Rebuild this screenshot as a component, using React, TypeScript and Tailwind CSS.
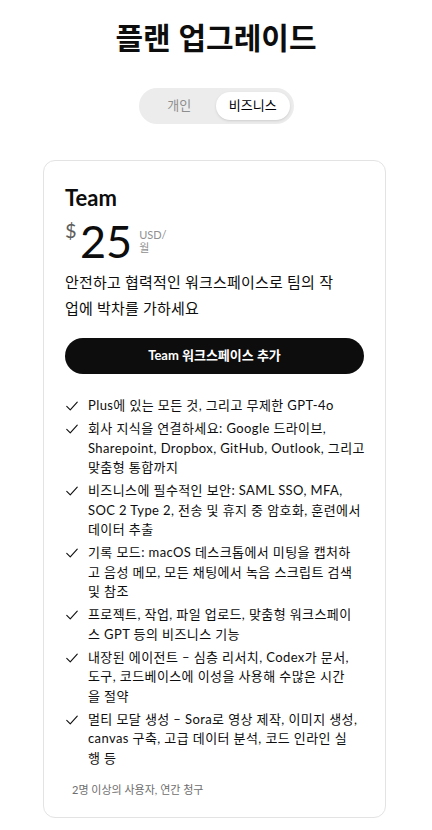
import React, { useState } from 'react';

// each feature is kept on the same line breaks as the design
const features: string[][] = [
  ['Plus에 있는 모든 것, 그리고 무제한 GPT-4o'],
  ['회사 지식을 연결하세요: Google 드라이브,', 'Sharepoint, Dropbox, GitHub, Outlook, 그리고', '맞춤형 통합까지'],
  ['비즈니스에 필수적인 보안: SAML SSO, MFA,', 'SOC 2 Type 2, 전송 및 휴지 중 암호화, 훈련에서', '데이터 추출'],
  ['기록 모드: macOS 데스크톱에서 미팅을 캡처하', '고 음성 메모, 모든 채팅에서 녹음 스크립트 검색', '및 참조'],
  ['프로젝트, 작업, 파일 업로드, 맞춤형 워크스페이', '스 GPT 등의 비즈니스 기능'],
  ['내장된 에이전트 – 심층 리서치, Codex가 문서,', '도구, 코드베이스에 이성을 사용해 수많은 시간', '을 절약'],
  ['멀티 모달 생성 – Sora로 영상 제작, 이미지 생성,', 'canvas 구축, 고급 데이터 분석, 코드 인라인 실', '행 등'],
];

function Check() {
  return (
    <svg viewBox="0 0 16 16" className="w-[14px] h-[14px] shrink-0 mt-[3px]" fill="none" stroke="#111" strokeWidth="1.3" strokeLinecap="round" strokeLinejoin="round">
      <path d="M2 8.5 L6 12.5 L14 3.5" />
    </svg>
  );
}

export default function App() {
  const [tab, setTab] = useState<'personal' | 'business'>('business');

  return (
    <div className="min-h-screen bg-white text-[#0d0d0d] font-['Noto_Sans','Noto_Sans_CJK_KR',sans-serif]">
      <div className="flex flex-col items-center pt-[18px]">
        <h1 className="text-[30px] font-bold leading-[40px]">플랜 업그레이드</h1>

        {/* toggle */}
        <div className="mt-[30px] flex items-center bg-[#ececec] rounded-full p-[4px] w-[155px] h-[36px]">
          <button
            onClick={() => setTab('personal')}
            className={`flex-1 h-full rounded-full text-[13px] ${tab === 'personal' ? 'bg-white text-black shadow-sm' : 'text-[#8e8e8e]'}`}
          >
            개인
          </button>
          <button
            onClick={() => setTab('business')}
            className={`flex-1 h-full rounded-full text-[13px] ${tab === 'business' ? 'bg-white text-black shadow-sm' : 'text-[#8e8e8e]'}`}
          >
            비즈니스
          </button>
        </div>
      </div>

      {/* card */}
      <div className="mt-[36px] ml-[43px] w-[343px] border border-[#e3e3e3] rounded-[12px] px-[21px] pt-[22px] pb-[19px] font-['Lato','Noto_Sans_CJK_KR',sans-serif] tracking-[0.4px]">
        <h2 className="text-[22px] font-bold leading-[30px] tracking-normal">Team</h2>

        <div className="mt-[8px] flex items-start h-[40px]">
          <span className="text-[20px] text-[#5d5d5d] leading-[20px] mt-[-1px]">$</span>
          <span className="text-[45px] leading-[40px] ml-[3px] tracking-normal">25</span>
          <div className="ml-[7px] mt-[7px] text-[11px] leading-[13px] text-[#8f8f8f] tracking-normal">
            <div>USD/</div>
            <div>월</div>
          </div>
        </div>

        <p className="mt-[8px] text-[15px] leading-[26px] tracking-[0.2px]">
          <span className="block whitespace-nowrap">안전하고 협력적인 워크스페이스로 팀의 작</span>
          <span className="block whitespace-nowrap">업에 박차를 가하세요</span>
        </p>

        <button className="mt-[17px] w-full h-[36px] rounded-full bg-[#0d0d0d] text-white text-[13px] font-bold tracking-normal">
          Team 워크스페이스 추가
        </button>

        <ul className="mt-[22px] flex flex-col gap-[3.5px]">
          {features.map((lines) => (
            <li key={lines[0]} className="flex gap-[9px] text-[13px] leading-[19.5px]">
              <Check />
              <span>
                {lines.map((l) => (
                  <span key={l} className="block whitespace-nowrap">{l}</span>
                ))}
              </span>
            </li>
          ))}
        </ul>

        <p className="mt-[14px] ml-[7px] text-[11px] text-[#6e6e6e] leading-[16px] tracking-normal">2명 이상의 사용자, 연간 청구</p>
      </div>
    </div>
  );
}
